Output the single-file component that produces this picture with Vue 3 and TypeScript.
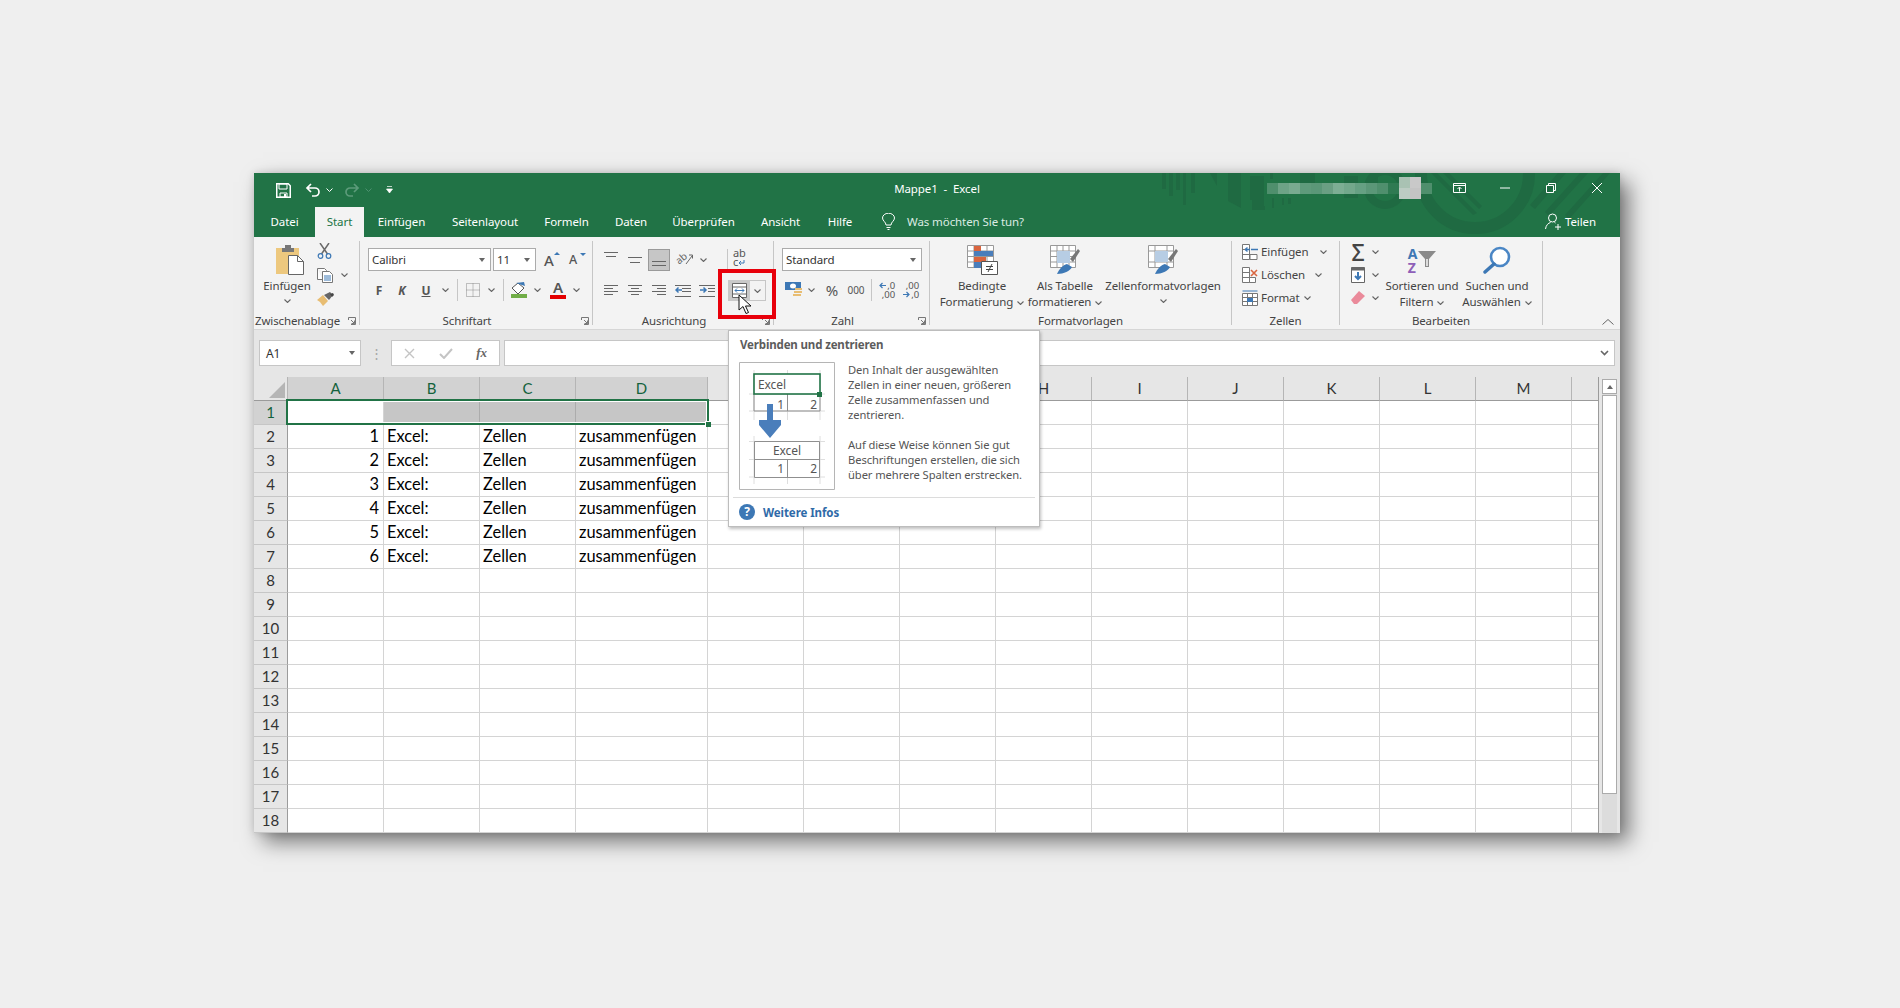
<script setup lang="ts">
const tabs = ['Datei', 'Start', 'Einfügen', 'Seitenlayout', 'Formeln', 'Daten', 'Überprüfen', 'Ansicht', 'Hilfe']
const columns = ['A', 'B', 'C', 'D', 'E', 'F', 'G', 'H', 'I', 'J', 'K', 'L', 'M', '']
const selectedCols = ['A', 'B', 'C', 'D']

// 18 full rows, the next one only shows as a sliver at the window's edge
const rowCount = 19
const rows = Array.from({ length: rowCount }, (_, i) => i + 1)

// content of the sheet, rows 2 to 7
function cellText(row: number, col: string): string {
  if (row < 2 || row > 7) return ''
  if (col === 'A') return String(row - 1)
  if (col === 'B') return 'Excel:'
  if (col === 'C') return 'Zellen'
  if (col === 'D') return 'zusammenfügen'
  return ''
}

// the blurred account name in the title bar
const blurBlocks = [
  '#4f8f6d', '#6ea387', '#79ab90', '#5f9a7b', '#5b9778', '#6a9f83', '#7dae94',
  '#73a88c', '#66a083', '#5b9778', '#4f8f6d', '#2f7a52',
]
const faceBlocks = ['#a9c2b3', '#c9c9c9', '#bcccc3', '#c4c4c4']
</script>

<template>
  <div class="page">
    <svg class="defs" width="0" height="0">
      <symbol id="chev" viewBox="0 0 7 4"><path d="M.5.5l3 3 3-3" fill="none" stroke="#666" stroke-width="1.1" /></symbol>
      <symbol id="launch" viewBox="0 0 8 8"><path d="M.5 3V.5h7v7H3M3 3l3.5 3.5M6.5 3.5v3h-3" fill="none" stroke="#777" /></symbol>
    </svg>

    <div class="window">
      <header class="head">
        <svg class="pattern" viewBox="254 173 1366 64" width="1366" height="64" fill="#1f6a42">
          <path d="M1162 173h4v16h-4zM1169 173h4v23h-4zM1176 173h4v17h-4zM1183 173h3v32h-3zM1191 173h4v20h-4z" />
          <path d="M1210 173h7v13zM1228 173h13v35l-13-7zM1250 176h14v30h1v4h-13v-10h-2z" />
          <path d="M1270 173h3v6h-3zM1272 198h2v10h-2zM1282 198h2v7h-2zM1288 198h3v6h-3zM1300 173h15v10h-15z" />
          <path d="M1344 176h14v22h-14zM1370 173h8v15h-8z" />
          <circle cx="1385" cy="188" r="17" fill="none" stroke="#1f6a42" stroke-width="8" />
          <circle cx="1475" cy="174" r="54" fill="none" stroke="#1f6a42" stroke-width="12" />
          <path d="M1437 173l40 40-4 2-42-42zM1449 173l33 33-3 3-36-36zM1530 205l28-32h8l-31 36zM1545 212l35-39h8l-39 43zM1565 215l38-42h7l-41 46z" />
        </svg>

        <div class="titlerow">
          <div class="quick">
            <svg class="save" width="15" height="15" viewBox="0 0 15 15"><path d="M.75.75h11.5l2 2v11.5H.75z" fill="none" stroke="#fff" stroke-width="1.5" /><path d="M3 1h8v5H3zM4 10h7v4H4z" fill="none" stroke="#fff" /><path d="M8 11h2v3H8z" fill="#fff" /></svg>
            <svg class="undo" width="16" height="14" viewBox="0 0 16 14"><path d="M6 1L2 5l4 4M2 5h8a4 4 0 0 1 0 8H7" fill="none" stroke="#fff" stroke-width="1.7" /></svg>
            <svg class="chev-w" width="7" height="4"><path d="M.5.5l3 3 3-3" fill="none" stroke="#fff" /></svg>
            <svg class="redo" width="16" height="14" viewBox="0 0 16 14"><path d="M10 1l4 4-4 4M14 5H6a4 4 0 0 0 0 8h3" fill="none" stroke="#5c9b7a" stroke-width="1.7" /></svg>
            <svg class="chev-d" width="7" height="4"><path d="M.5.5l3 3 3-3" fill="none" stroke="#4d9170" /></svg>
            <svg class="custom" width="7" height="8"><path d="M1 .5h5M.5 3h6l-3 4z" fill="#fff" stroke="#fff" stroke-width=".7" /></svg>
          </div>
          <div class="doc-title">Mappe1&nbsp; - &nbsp;Excel</div>
          <div class="winbar">
            <div class="account">
              <span v-for="(c, i) in blurBlocks" :key="i" class="blur" :style="{ background: c }" />
              <span class="face"><span v-for="(c, i) in faceBlocks" :key="i" :style="{ background: c }" /></span>
              <span class="blur" :style="{ background: '#4f8f6d' }" />
            </div>
            <button class="winbtn"><svg width="13" height="10" viewBox="0 0 13 10"><path d="M.5.5h12v9H.5zM.5 2.5h12M6.5 8.5V4.5M4.5 6l2-2 2 2" fill="none" stroke="#fff" /></svg></button>
            <button class="winbtn"><svg width="10" height="2"><path d="M0 1h10" stroke="#fff" /></svg></button>
            <button class="winbtn"><svg width="10" height="10" viewBox="0 0 10 10"><path d="M.5 2.5h7v7h-7zM2.5 2.5v-2h7v7h-2" fill="none" stroke="#fff" /></svg></button>
            <button class="winbtn"><svg width="10" height="10" viewBox="0 0 10 10"><path d="M0 0l10 10M10 0L0 10" stroke="#fff" /></svg></button>
          </div>
        </div>

        <nav class="tabs">
          <span v-for="t in tabs" :key="t" class="tab" :class="{ active: t === 'Start' }">{{ t }}</span>
          <span class="tell">
            <svg width="13" height="17" viewBox="0 0 13 17"><path d="M4 12c0-3-3.500-4-3.500-7a6 4.800 0 0 1 12 0c0 3-3.500 4-3.500 7zM4.500 14.500h4M5.500 16.500h2" fill="none" stroke="#fff" /></svg>
            <span>Was möchten Sie tun?</span>
          </span>
          <span class="share">
            <svg width="17" height="17" viewBox="0 0 17 17"><circle cx="7.500" cy="5" r="4" fill="none" stroke="#fff" /><path d="M.5 16c.5-4 3-6 5-6.500M9.500 9.500l1 .5M13 11v6M10 14h6" fill="none" stroke="#fff" /></svg>
            <span>Teilen</span>
          </span>
        </nav>
      </header>

      <section class="ribbon">
        <!-- Zwischenablage -->
        <div class="group g-clip">
          <div class="body row-body">
            <div class="big paste">
              <svg class="big-icon" width="28" height="30" viewBox="0 0 28 30">
                <path d="M0 3h23v26H0z" fill="#edc87e" />
                <path d="M6 3h3V0h6v3h3v4H6z" fill="#777" />
                <path d="M12.500 10.500h9l6 6v13h-15z" fill="#fff" stroke="#666" />
                <path d="M21.500 10.500v6h6" fill="none" stroke="#666" />
              </svg>
              <span>Einfügen</span>
              <svg class="ch solo" width="7" height="4"><use href="#chev" /></svg>
            </div>
            <div class="clip-tools">
              <div class="clip-row">
                <svg width="15" height="16" viewBox="0 0 15 16"><path d="M3 0l7.500 11M12 0L4.500 11" stroke="#6a6a6a" stroke-width="1.500" fill="none" /><circle cx="3.500" cy="13" r="2.300" fill="none" stroke="#3d78b5" stroke-width="1.200" /><circle cx="11.500" cy="13" r="2.300" fill="none" stroke="#3d78b5" stroke-width="1.200" /></svg>
              </div>
              <div class="clip-row">
                <svg width="16" height="15" viewBox="0 0 16 15"><path d="M.5.5h7l2 2v3M.5.5v11h5" fill="#fff" stroke="#777" /><path d="M5.500 3.500h7l3 3v8h-10z" fill="#fff" stroke="#777" /><path d="M7 8h7M7 10h7M7 12h7" stroke="#3d78b5" /></svg>
                <svg class="ch" width="7" height="4"><use href="#chev" /></svg>
              </div>
              <div class="clip-row">
                <svg width="18" height="14" viewBox="0 0 18 14"><path d="M0 8l6-5 5 6-5 5-3-4z" fill="#e8bd72" /><path d="M7 3l6-3 3 3-4 5z" fill="#666" /><path d="M13 2l3-1 1 2-2 2z" fill="#444" /></svg>
              </div>
            </div>
          </div>
          <div class="label-row"><span class="label">Zwischenablage</span><svg class="launch" width="8" height="8"><use href="#launch" /></svg></div>
        </div>
        <i class="sep" />

        <!-- Schriftart -->
        <div class="group g-font">
          <div class="body rows">
            <div class="tool-row">
              <div class="combo w-font"><span>Calibri</span><i class="tri" /></div>
              <div class="combo w-size"><span>11</span><i class="tri" /></div>
              <span class="grow-a">A<i class="up" /></span>
              <span class="shrink-a">A<i class="down" /></span>
            </div>
            <div class="tool-row">
              <span class="tb fmt">F</span>
              <span class="tb fmt w24 it">K</span>
              <span class="tb fmt w24 ul">U</span>
              <span class="cb"><svg width="7" height="4"><use href="#chev" /></svg></span>
              <i class="mini-sep s5" />
              <span class="tb ml4">
                <svg width="14" height="14" viewBox="0 0 14 14"><path d="M.5.5h13v13H.5zM7 .5v13M.5 7h13" fill="none" stroke="#888" stroke-dasharray="1 1" /></svg>
              </span>
              <span class="cb"><svg width="7" height="4"><use href="#chev" /></svg></span>
              <i class="mini-sep s5" />
              <span class="tb ml4">
                <svg width="16" height="16" viewBox="0 0 16 16"><path d="M7 1l6 5-6 6-6-6z" fill="#fff" stroke="#555" /><path d="M5 1l8-1 1 4z" fill="#3d78b5" /><path d="M0 12h16v4H0z" fill="#70ad47" /></svg>
              </span>
              <span class="cb"><svg width="7" height="4"><use href="#chev" /></svg></span>
              <span class="tb ml3 color-a">A<i /></span>
              <span class="cb"><svg width="7" height="4"><use href="#chev" /></svg></span>
            </div>
          </div>
          <div class="label-row"><span class="label">Schriftart</span><svg class="launch" width="8" height="8"><use href="#launch" /></svg></div>
        </div>
        <i class="sep" />

        <!-- Ausrichtung -->
        <div class="group g-align">
          <div class="body rows">
            <div class="tool-row">
              <span class="tb al-top"><svg width="14" height="12" viewBox="0 0 14 12"><path d="M0 1.500h14M2 5.500h10" stroke="#666" /></svg></span>
              <span class="tb"><svg width="14" height="8" viewBox="0 0 14 8"><path d="M0 1.500h14M2 6.500h10" stroke="#666" /></svg></span>
              <span class="tb on al-bot"><svg width="14" height="7" viewBox="0 0 14 7"><path d="M0 1.500h14M0 5.500h14" stroke="#666" /></svg></span>
              <span class="tb w24 orient">
                <span class="orient-ab">ab</span>
                <svg width="19" height="15" viewBox="0 0 19 15"><path d="M11 12l6-8M14 3h3.500v3.500" fill="none" stroke="#666" /></svg>
              </span>
              <span class="cb w10"><svg width="7" height="4"><use href="#chev" /></svg></span>
              <i class="mini-sep wrap-sep" />
              <span class="wrap-ab">
                <span>ab</span>
                <span>c<svg width="7" height="6" viewBox="0 0 7 6"><path d="M6 0v3H1M3 1L1 3l2 2" fill="none" stroke="#3d78b5" /></svg></span>
              </span>
            </div>
            <div class="tool-row">
              <span class="tb"><svg width="14" height="11" viewBox="0 0 14 11"><path d="M0 .5h14M0 3.500h9M0 6.500h14M0 9.500h9" stroke="#666" /></svg></span>
              <span class="tb"><svg width="14" height="11" viewBox="0 0 14 11"><path d="M0 .5h14M3 3.500h8M0 6.500h14M3 9.500h8" stroke="#666" /></svg></span>
              <span class="tb"><svg width="14" height="11" viewBox="0 0 14 11"><path d="M0 .5h14M5 3.500h9M0 6.500h14M5 9.500h9" stroke="#666" /></svg></span>
              <span class="tb"><svg width="16" height="12" viewBox="0 0 16 12"><path d="M0 .5h16M7 3.500h9M7 6.500h9M0 11.500h16" stroke="#666" /><path d="M7 5H1M3.500 2.500L1 5l2.500 2.500" fill="none" stroke="#3d78b5" stroke-width="1.500" /></svg></span>
              <span class="tb"><svg width="16" height="12" viewBox="0 0 16 12"><path d="M0 .5h16M9 3.500h7M9 6.500h7M0 11.500h16" stroke="#666" /><path d="M1 5h6M4.500 2.500L7 5 4.500 7.500" fill="none" stroke="#3d78b5" stroke-width="1.500" /></svg></span>
              <span class="merge">
                <span class="merge-main">
                  <svg width="15" height="15" viewBox="0 0 15 15"><path d="M.5.5h14v14H.5z" fill="#fff" stroke="#666" /><path d="M.5 4h14M.5 11h14" stroke="#666" /><path d="M3 7.500h9M5 5.500l-2 2 2 2M10 5.500l2 2-2 2" fill="none" stroke="#3d78b5" /></svg>
                </span>
                <span class="merge-drop"><svg width="7" height="4"><use href="#chev" /></svg></span>
              </span>
            </div>
          </div>
          <div class="label-row"><span class="label">Ausrichtung</span><svg class="launch" width="8" height="8"><use href="#launch" /></svg></div>
        </div>
        <i class="sep" />

        <!-- Zahl -->
        <div class="group g-num">
          <div class="body rows">
            <div class="tool-row">
              <div class="combo w-num"><span>Standard</span><i class="tri" /></div>
            </div>
            <div class="tool-row">
              <span class="tb">
                <svg width="17" height="16" viewBox="0 0 17 16"><path d="M0 0h16v8H0z" fill="#3d78b5" /><ellipse cx="8" cy="4" rx="3" ry="2.500" fill="#fff" /><path d="M9 9h8v2H9zM8 12h8v2H8z" fill="#e8bd72" /><path d="M10 6h7v2h-7z" fill="#e8bd72" /></svg>
              </span>
              <span class="cb"><svg width="7" height="4"><use href="#chev" /></svg></span>
              <span class="tb ml3 pct">%</span>
              <span class="tb ml2 thou">000</span>
              <i class="mini-sep s4" />
              <span class="tb ml4 dec">
                <span class="dec-text">,0<br />,00</span>
                <svg width="7" height="7" viewBox="0 0 7 7"><path d="M7 3.500H1M3.500 1L1 3.500 3.500 6" fill="none" stroke="#3d78b5" stroke-width="1.200" /></svg>
              </span>
              <span class="tb ml2 dec">
                <span class="dec-text">,00<br />,0</span>
                <svg class="low" width="7" height="7" viewBox="0 0 7 7"><path d="M0 3.500h6M3.500 1L6 3.500 3.500 6" fill="none" stroke="#3d78b5" stroke-width="1.200" /></svg>
              </span>
            </div>
          </div>
          <div class="label-row"><span class="label">Zahl</span><svg class="launch" width="8" height="8"><use href="#launch" /></svg></div>
        </div>
        <i class="sep" />

        <!-- Formatvorlagen -->
        <div class="group g-style">
          <div class="body row-body">
            <div class="big w90">
              <svg class="big-icon" width="31" height="30" viewBox="0 0 31 30">
                <path d="M.5.5h26v22H.5zM.5 6h26M.5 11.500h26M.5 17h26M7 .5v22M20 .5v22" fill="#fff" stroke="#999" />
                <path d="M7 1h7v5H7z" fill="#d9653f" /><path d="M7 6h19v5H7z" fill="#4a7ebb" /><path d="M7 12h12v5H7z" fill="#d9653f" /><path d="M7 17h7v6H7z" fill="#4a7ebb" />
                <path d="M14.500 16.500h16v13h-16z" fill="#fff" stroke="#555" />
                <path d="M19 21.500h7M19 24.500h7M25 19l-4 8" fill="none" stroke="#444" />
              </svg>
              <span>Bedingte</span>
              <span>Formatierung<svg class="ch inline" width="7" height="4"><use href="#chev" /></svg></span>
            </div>
            <div class="big w76">
              <svg class="big-icon" width="30" height="30" viewBox="0 0 30 30">
                <path d="M.5.5h25v22H.5zM.5 6h25M.5 11.500h25M.5 17h25M7 .5v22M13 .5v22M19 .5v22" fill="#fff" stroke="#999" />
                <path d="M7 6h13v12H7z" fill="#b7cde4" />
                <path d="M20 14L28 4l2 2-7 11z" fill="#777" />
                <path d="M7 29c2-5 6-9 10-10l5 3c-2 4-8 7-15 7z" fill="#3d78b5" />
              </svg>
              <span>Als Tabelle</span>
              <span>formatieren<svg class="ch inline" width="7" height="4"><use href="#chev" /></svg></span>
            </div>
            <div class="big w120">
              <svg class="big-icon" width="30" height="30" viewBox="0 0 30 30">
                <path d="M.5.5h25v22H.5zM.5 6h25M.5 17h25M7 .5v22M19 .5v22" fill="#fff" stroke="#999" />
                <path d="M7 6h13v11H7z" fill="#b7cde4" />
                <path d="M20 14L28 4l2 2-7 11z" fill="#777" />
                <path d="M7 29c2-5 6-9 10-10l5 3c-2 4-8 7-15 7z" fill="#3d78b5" />
              </svg>
              <span>Zellenformatvorlagen</span>
              <svg class="ch solo" width="7" height="4"><use href="#chev" /></svg>
            </div>
          </div>
          <div class="label-row none"><span class="label">Formatvorlagen</span></div>
        </div>
        <i class="sep" />

        <!-- Zellen -->
        <div class="group g-cells">
          <div class="body cell-tools">
            <div class="cell-tool">
              <svg width="16" height="16" viewBox="0 0 16 16"><path d="M.5.5h7v15h-7zM.5 5.500h7M.5 10.500h7M8 10.500v5h7v-5z" fill="#fff" stroke="#777" /><path d="M9 5.500h7M3 5.500l2.500-2M3 5.500l2.500 2M3 5.500h5" fill="none" stroke="#3d78b5" stroke-width="1.300" /></svg>
              <span>Einfügen</span>
              <svg class="ch m8" width="7" height="4"><use href="#chev" /></svg>
            </div>
            <div class="cell-tool">
              <svg width="16" height="16" viewBox="0 0 16 16"><path d="M.5.5h7v15h-7zM.5 5.500h7M.5 10.500h7M7.500 10.500h6v5h-6z" fill="#fff" stroke="#777" /><path d="M9 3l6 6M15 3L9 9" stroke="#d9653f" stroke-width="1.600" /></svg>
              <span>Löschen</span>
              <svg class="ch m7" width="7" height="4"><use href="#chev" /></svg>
            </div>
            <div class="cell-tool">
              <svg width="16" height="16" viewBox="0 0 16 16"><path d="M.5 3.500h15v12H.5zM.5 7.500h15M.5 11.500h15M5.500 3.500v12M10.500 3.500v12" fill="#fff" stroke="#777" /><path d="M5 8h6v4H5z" fill="#3d78b5" /><path d="M.5 1h15" stroke="#3d78b5" /></svg>
              <span>Format</span>
              <svg class="ch m1" width="7" height="4"><use href="#chev" /></svg>
            </div>
          </div>
          <div class="label-row none"><span class="label">Zellen</span></div>
        </div>
        <i class="sep" />

        <!-- Bearbeiten -->
        <div class="group g-edit">
          <div class="body row-body">
            <div class="edit-tools">
              <div class="edit-row">
                <span class="ei sigma">Σ</span>
                <svg width="7" height="4"><use href="#chev" /></svg>
              </div>
              <div class="edit-row">
                <span class="ei"><svg width="14" height="16" viewBox="0 0 14 16"><path d="M.5.5h13v15H.5z" fill="#fff" stroke="#666" /><path d="M.5.5h13v3H.5z" fill="#666" /><path d="M7 5v7M4 9l3 3 3-3" fill="none" stroke="#3d78b5" stroke-width="2" /></svg></span>
                <svg width="7" height="4"><use href="#chev" /></svg>
              </div>
              <div class="edit-row">
                <span class="ei"><svg width="14" height="13" viewBox="0 0 14 13"><path d="M0 9l8-9 6 5-8 8H3z" fill="#ea8a9a" /></svg></span>
                <svg width="7" height="4"><use href="#chev" /></svg>
              </div>
            </div>
            <div class="big w76">
              <div class="sort-icon">
                <span class="sort-letters"><b>A</b><b>Z</b></span>
                <svg width="18" height="18" viewBox="0 0 18 18"><path d="M0 1h18l-7 8v8H7V9z" fill="#8a8a8a" /><path d="M8 9v7h2V9z" fill="#dcdcdc" /></svg>
              </div>
              <span>Sortieren und</span>
              <span>Filtern<svg class="ch inline" width="7" height="4"><use href="#chev" /></svg></span>
            </div>
            <div class="big w74">
              <svg class="big-icon" width="28" height="28" viewBox="0 0 28 28">
                <circle cx="17" cy="11" r="9" fill="#fff" stroke="#4a86c5" stroke-width="2.600" />
                <path d="M11 18L2 26" stroke="#3d78b5" stroke-width="3.400" stroke-linecap="round" />
              </svg>
              <span>Suchen und</span>
              <span>Auswählen<svg class="ch inline" width="7" height="4"><use href="#chev" /></svg></span>
            </div>
          </div>
          <div class="label-row none"><span class="label">Bearbeiten</span></div>
        </div>
        <i class="sep" />

        <div class="collapse">
          <svg width="12" height="6" viewBox="0 0 12 6"><path d="M.5 5.500L6 .5l5.500 5" fill="none" stroke="#666" /></svg>
        </div>
      </section>

      <div class="formula">
        <div class="namebox"><span>A1</span><i class="tri" /></div>
        <span class="grip">⋮</span>
        <div class="fx-box">
          <svg width="11" height="11" viewBox="0 0 11 11"><path d="M1 1l9 9M10 1l-9 9" stroke="#c4c4c4" stroke-width="1.400" /></svg>
          <svg width="14" height="11" viewBox="0 0 14 11"><path d="M1 6l4 4 8-9" fill="none" stroke="#c4c4c4" stroke-width="2" /></svg>
          <span class="fx">fx</span>
        </div>
        <div class="input"><svg width="9" height="6" viewBox="0 0 9 6"><path d="M1 1l3.500 3.500L8 1" fill="none" stroke="#666" stroke-width="1.600" /></svg></div>
      </div>

      <div class="sheet-wrap">
        <div class="sheet">
          <div class="sheet-grid">
            <div class="corner"><i /></div>
            <div
              v-for="c in columns"
              :key="'h' + c"
              class="col-head"
              :class="{ sel: selectedCols.includes(c), last: c === '' }"
            >{{ c }}</div>
            <template v-for="r in rows" :key="r">
              <div class="row-head" :class="{ sel: r === 1 }">{{ r < rowCount ? r : '' }}</div>
              <div
                v-for="c in columns"
                :key="c"
                class="cell"
                :class="{
                  num: c === 'A',
                  merged: r === 1 && ['B', 'C', 'D'].includes(c),
                  last: c === '',
                }"
              >{{ cellText(r, c) }}</div>
            </template>
          </div>
          <div class="selection"><i class="handle" /></div>
        </div>
        <div class="vscroll">
          <div class="vs-up"><i /></div>
          <div class="vs-thumb" />
        </div>
      </div>

      <div class="redbox" />
      <svg class="cursor" width="14" height="21" viewBox="0 0 14 21"><path d="M1 1v15l4-3.500 3 7 2.500-1-3-6.500H13z" fill="#fff" stroke="#111" /></svg>

      <aside class="tip">
        <div class="tip-title">Verbinden und zentrieren</div>
        <div class="tip-body">
          <svg class="tip-pic" width="96" height="128" viewBox="0 0 96 128">
            <path d="M.5.500h95v127H.5z" fill="#fff" stroke="#b5b5b5" />
            <path d="M15 8v50M81 8v50M48.500 8v50M10 32h76M10 49h76M15 74v48M81 74v48M48.500 110v12M10 79.500h76M10 97.500h76M10 115h76" stroke="#dedede" fill="none" />
            <path d="M15 32v17h66V32M48.500 32v17" stroke="#8f8f8f" fill="none" />
            <rect x="15" y="12" width="66" height="20" fill="#fff" stroke="#217346" stroke-width="1.600" />
            <rect x="78" y="30" width="5" height="5" fill="#217346" />
            <text x="19" y="27" font-size="12" fill="#555" font-family="Noto Sans">Excel</text>
            <text x="45" y="47" font-size="12" fill="#555" text-anchor="end" font-family="Noto Sans">1</text>
            <text x="78" y="47" font-size="12" fill="#555" text-anchor="end" font-family="Noto Sans">2</text>
            <path d="M28 42h6v16h8v5l-11 13-11-13v-5h8z" fill="#4a7ebb" />
            <path d="M15.500 79.500h65v36h-65zM15.500 97.500h65M48.500 97.500v18" fill="#fff" stroke="#8f8f8f" />
            <text x="48" y="93" font-size="12" fill="#555" text-anchor="middle" font-family="Noto Sans">Excel</text>
            <text x="45" y="111" font-size="12" fill="#555" text-anchor="end" font-family="Noto Sans">1</text>
            <text x="78" y="111" font-size="12" fill="#555" text-anchor="end" font-family="Noto Sans">2</text>
          </svg>
          <div class="tip-text">
            <p>Den Inhalt der ausgewählten<br />Zellen in einer neuen, größeren<br />Zelle zusammenfassen und<br />zentrieren.</p>
            <p>Auf diese Weise können Sie gut<br />Beschriftungen erstellen, die sich<br />über mehrere Spalten erstrecken.</p>
          </div>
        </div>
        <div class="tip-foot">
          <span class="help">?</span>
          <span>Weitere Infos</span>
        </div>
      </aside>
    </div>
  </div>
</template>

<style>
html,
body {
  margin: 0;
  background: #efefef;
}
</style>

<style scoped>
.page {
  width: 1900px;
  height: 1008px;
  box-sizing: border-box;
  padding: 173px 0 0 254px;
  background: #efefef;
  overflow: hidden;
  font-family: "Noto Sans", "Liberation Sans", sans-serif;
  font-size: 11.5px;
  letter-spacing: -0.08px;
  color: #444;
}
.defs {
  position: absolute;
}
.window {
  position: relative;
  width: 1366px;
  height: 660px;
  display: flex;
  flex-direction: column;
  background: #e6e6e6;
  box-shadow: 9px 9px 20px rgba(0, 0, 0, 0.5), 0 0 8px rgba(0, 0, 0, 0.12);
}

/* title bar */
.head {
  position: relative;
  height: 64px;
  flex: none;
  background: #217346;
  color: #fff;
  overflow: hidden;
}
.pattern {
  position: absolute;
  left: 0;
  top: 0;
}
.titlerow {
  position: relative;
  height: 34px;
  display: grid;
  grid-template-columns: 1fr auto 1fr;
  align-items: center;
}
.quick {
  display: flex;
  align-items: center;
  padding-left: 22px;
}
.undo { margin-left: 14px; }
.chev-w { margin-left: 5px; }
.redo { margin-left: 11px; }
.chev-d { margin-left: 5px; }
.custom { margin-left: 14px; }
.doc-title {
  font-size: 11.5px;
  white-space: pre;
  padding-bottom: 3px;
}
.winbar {
  display: flex;
  align-items: center;
  justify-content: flex-end;
  align-self: start;
  height: 30px;
}
.account {
  display: flex;
  align-items: center;
  margin-right: 4px;
}
.blur {
  width: 11px;
  height: 11px;
}
.face {
  width: 22px;
  height: 22px;
  display: grid;
  grid-template-columns: 11px 11px;
  grid-auto-rows: 11px;
}
.winbtn {
  width: 46px;
  height: 30px;
  padding: 0;
  border: 0;
  background: none;
  display: flex;
  align-items: center;
  justify-content: center;
}
.tabs {
  position: relative;
  height: 30px;
  display: grid;
  grid-template-columns: 61px 49px 75px 92px 71px 58px 87px 67px 52px auto 1fr;
  font-size: 11.5px;
}
.tab {
  display: flex;
  align-items: center;
  justify-content: center;
  padding-bottom: 2px;
}
.tab.active {
  background: #f3f3f3;
  color: #217346;
}
.tell {
  display: flex;
  align-items: center;
  gap: 12px;
  padding: 0 0 2px 16px;
  color: #dcebe3;
}
.share {
  display: flex;
  align-items: center;
  justify-content: flex-end;
  gap: 3px;
  padding: 0 24px 2px 0;
}

/* ribbon */
.ribbon {
  height: 92px;
  flex: none;
  display: flex;
  background: #f3f3f3;
  border-bottom: 1px solid #d6d6d6;
  box-sizing: content-box;
}
.sep {
  flex: none;
  width: 1px;
  margin: 4px 0;
  background: #c6c6c6;
}
.group {
  flex: none;
  display: flex;
  flex-direction: column;
  height: 92px;
}
.g-clip { width: 105px; }
.g-font { width: 232px; }
.g-align { width: 180px; }
.g-num { width: 155px; }
.g-style { width: 301px; }
.g-cells { width: 107px; }
.g-edit { width: 202px; }
.body {
  flex: 1;
  min-height: 0;
}
.label-row {
  display: flex;
  align-items: center;
  height: 14px;
  margin-bottom: 1px;
  padding-right: 3px;
}
.label {
  flex: 1;
  text-align: center;
  white-space: nowrap;
  margin-top: -2px;
  letter-spacing: -0.13px;
}
.launch {
  margin-left: 7px;
}
.label-row.none {
  padding-right: 0;
}
.rows {
  padding-top: 11px;
  display: flex;
  flex-direction: column;
  gap: 8px;
}
.g-font .rows { padding-left: 8px; }
.g-align .rows { padding-left: 7px; }
.g-num .rows { padding-left: 8px; }
.tool-row {
  display: flex;
  align-items: center;
  height: 23px;
}
.g-font .tool-row + .tool-row,
.g-num .tool-row + .tool-row {
  height: 22px;
}
.row-body {
  display: flex;
}
.g-style .row-body { padding-left: 7px; }
.g-edit .row-body { padding-left: 7px; }

.combo {
  box-sizing: border-box;
  height: 23px;
  display: flex;
  align-items: center;
  justify-content: space-between;
  background: #fff;
  border: 1px solid #ababab;
  padding: 0 5px 0 3px;
  color: #333;
}
.w-font { width: 123px; }
.w-size { width: 43px; margin-left: 2px; }
.w-num { width: 140px; }
.tri {
  width: 0;
  height: 0;
  border: 3.5px solid transparent;
  border-top: 4px solid #666;
  border-bottom: 0;
}
.grow-a,
.shrink-a {
  position: relative;
  font-weight: 500;
  color: #555;
}
.grow-a {
  margin-left: 8px;
  width: 13px;
  font-size: 15px;
}
.shrink-a {
  margin-left: 12px;
  width: 14px;
  font-size: 12.5px;
}
.up,
.down {
  position: absolute;
  right: -3px;
  top: 2px;
  width: 0;
  height: 0;
  border: 3px solid transparent;
}
.up { border-bottom: 3px solid #3d78b5; border-top: 0; }
.down { border-top: 3px solid #3d78b5; border-bottom: 0; }

.tb {
  box-sizing: border-box;
  flex: none;
  width: 22px;
  height: 22px;
  display: flex;
  align-items: center;
  justify-content: center;
}
.g-align .tb {
  margin-right: 2px;
}
.g-align .tb.orient {
  margin-right: 0;
  position: relative;
}
.orient-ab {
  position: absolute;
  left: 3px;
  top: 3px;
  font-size: 10px;
  line-height: 12px;
  color: #666;
  transform: rotate(-40deg);
}
.w24 { width: 24px; }
.w10 { width: 10px; }
.ml2 { margin-left: 2px; }
.ml3 { margin-left: 3px; }
.ml4 { margin-left: 4px; }
.cb {
  flex: none;
  width: 14px;
  display: flex;
  align-items: center;
  justify-content: center;
}
.fmt {
  font-size: 12px;
  font-weight: 700;
  color: #555;
}
.it { font-style: italic; }
.ul { text-decoration: underline; }
.mini-sep {
  flex: none;
  width: 1px;
  height: 22px;
  background: #c6c6c6;
}
.s5 { margin-left: 5px; }
.s4 { margin-left: 4px; }
.wrap-sep { margin-left: 17px; }
.on {
  background: #c6c6c6;
  border: 1px solid #9a9a9a;
}
.al-top { align-items: flex-start; padding-top: 2px; }
.al-bot { align-items: flex-end; padding-bottom: 3px; }
.color-a {
  flex-direction: column;
  font-size: 15px;
  font-weight: 600;
  line-height: 13px;
  color: #555;
}
.color-a i {
  width: 16px;
  height: 4px;
  margin-top: 1px;
  background: #e30000;
}
.wrap-ab {
  display: flex;
  flex-direction: column;
  margin: -6px 0 0 5px;
  font-size: 11px;
  line-height: 9px;
  color: #555;
}
.merge {
  display: flex;
  margin-left: 8px;
  height: 21px;
}
.merge-main {
  width: 22px;
  background: #c9c9c9;
  display: flex;
  align-items: center;
  justify-content: center;
}
.merge-drop {
  box-sizing: border-box;
  width: 16px;
  border: 1px solid #c6c6c6;
  border-left: 0;
  display: flex;
  align-items: center;
  justify-content: center;
}
.pct {
  font-size: 15px;
  color: #555;
}
.thou {
  font-size: 10px;
  color: #555;
}
.dec {
  position: relative;
  justify-content: flex-end;
  padding-right: 3px;
}
.dec-text {
  font-size: 9.5px;
  line-height: 9px;
  text-align: right;
  color: #555;
}
.dec svg {
  position: absolute;
  left: 3px;
  top: 3px;
}
.dec svg.low {
  top: 12px;
}

/* large buttons */
.big {
  flex: none;
  display: flex;
  flex-direction: column;
  align-items: center;
  padding-top: 8px;
  line-height: 16px;
  color: #444;
  white-space: nowrap;
}
.big-icon {
  height: 30px;
  margin-bottom: 3px;
  flex: none;
}
.sort-icon {
  height: 30px;
  margin-bottom: 3px;
  display: flex;
  align-items: flex-end;
}
.sort-letters {
  display: flex;
  flex-direction: column;
  font-size: 14px;
  line-height: 14px;
  color: #3d78b5;
}
.sort-letters b + b {
  color: #8e5fb8;
}
.sort-icon svg {
  margin: 0 0 7px 1px;
}
.paste { width: 60px; margin-left: 3px; }
.paste .big-icon { margin-left: 5px; }
.w90 { width: 90px; }
.w76 { width: 76px; }
.w74 { width: 74px; }
.w120 { width: 120px; }
.ch.inline { margin-left: 4px; vertical-align: middle; }
.ch.solo { margin-top: 5px; }
.clip-tools {
  display: flex;
  flex-direction: column;
  padding-top: 6px;
  gap: 8px;
}
.clip-row {
  height: 16px;
  display: flex;
  align-items: center;
  gap: 8px;
}
.cell-tools {
  padding: 3px 0 0 10px;
}
.cell-tool {
  height: 23px;
  display: flex;
  align-items: center;
  gap: 3px;
  white-space: nowrap;
}
.m8 { margin-left: 8px; }
.m7 { margin-left: 7px; }
.m1 { margin-left: 1px; }
.edit-tools {
  flex: none;
  width: 37px;
  padding-top: 3px;
}
.edit-row {
  height: 23px;
  display: flex;
  align-items: center;
  gap: 3px;
}
.ei {
  width: 22px;
  display: flex;
  align-items: center;
  justify-content: center;
}
.sigma {
  font-size: 23px;
  font-weight: 500;
  line-height: 20px;
  color: #444;
}
.collapse {
  flex: 1;
  display: flex;
  align-items: flex-end;
  justify-content: flex-end;
  padding: 0 6px 4px 0;
}

/* formula bar */
.formula {
  height: 26px;
  flex: none;
  margin-top: 10px;
  display: flex;
  align-items: center;
  padding-left: 5px;
  font-size: 12px;
}
.namebox {
  box-sizing: border-box;
  width: 102px;
  height: 26px;
  display: flex;
  align-items: center;
  justify-content: space-between;
  background: #fff;
  border: 1px solid #c6c6c6;
  padding: 0 5px 0 6px;
  color: #333;
}
.grip {
  width: 30px;
  text-align: center;
  color: #a5a5a5;
  font-size: 13px;
}
.fx-box {
  box-sizing: border-box;
  width: 109px;
  height: 26px;
  display: flex;
  align-items: center;
  justify-content: space-between;
  background: #fff;
  border: 1px solid #c6c6c6;
  padding: 0 12px;
}
.fx {
  font-family: "Liberation Serif", serif;
  font-style: italic;
  font-weight: 700;
  font-size: 13px;
  color: #666;
}
.input {
  box-sizing: border-box;
  width: 1111px;
  height: 26px;
  margin-left: 4px;
  display: flex;
  align-items: center;
  justify-content: flex-end;
  padding-right: 5px;
  background: #fff;
  border: 1px solid #c6c6c6;
}

/* sheet */
.sheet-wrap {
  flex: 1;
  min-height: 0;
  margin-top: 11px;
  display: flex;
  overflow: hidden;
}
.sheet {
  position: relative;
  flex: none;
  width: 1345px;
  box-sizing: border-box;
  border-right: 1px solid #9b9b9b;
  overflow: hidden;
}
.sheet-grid {
  display: grid;
  grid-template-columns: 34px repeat(3, 96px) 132px repeat(9, 96px) 26px;
  grid-auto-rows: 24px;
  font-family: Lato, "Liberation Sans", sans-serif;
  font-size: 16.4px;
  letter-spacing: 0;
  color: #000;
  background: #fff;
}
.corner {
  box-sizing: border-box;
  background: #e6e6e6;
  border-right: 1px solid #b5b5b5;
  border-bottom: 1px solid #9b9b9b;
  position: relative;
}
.corner i {
  position: absolute;
  right: 2px;
  bottom: 2px;
  width: 0;
  height: 0;
  border-left: 16px solid transparent;
  border-bottom: 16px solid #b5b5b5;
}
.col-head {
  box-sizing: border-box;
  background: #e6e6e6;
  border-right: 1px solid #b5b5b5;
  border-bottom: 1px solid #9b9b9b;
  display: flex;
  align-items: center;
  justify-content: center;
  padding-bottom: 2px;
  font-size: 15px;
  color: #333;
}
.col-head.sel {
  background: #d2d2d2;
  color: #14623c;
}
.col-head.last {
  border-right: 0;
}
.row-head {
  box-sizing: border-box;
  background: #e6e6e6;
  border-right: 1px solid #9b9b9b;
  border-bottom: 1px solid #c6c6c6;
  display: flex;
  align-items: center;
  justify-content: center;
  padding-bottom: 2px;
  font-size: 15px;
  color: #333;
}
.row-head.sel {
  background: #d2d2d2;
  color: #14623c;
}
.cell {
  box-sizing: border-box;
  border-right: 1px solid #d4d4d4;
  border-bottom: 1px solid #d4d4d4;
  padding: 0 4px 0 3px;
  line-height: 21px;
  white-space: nowrap;
  overflow: hidden;
}
.cell.num {
  text-align: right;
}
.cell.merged {
  background: #c6c6c6;
  border-right-color: #acacac;
}
.cell.last {
  border-right: 0;
}
.selection {
  position: absolute;
  left: 32px;
  top: 22px;
  width: 423px;
  height: 26px;
  box-sizing: border-box;
  border: 2px solid #217346;
  outline: 1px solid #fff;
  outline-offset: -3px;
}
.handle {
  position: absolute;
  right: -4px;
  bottom: -4px;
  width: 5px;
  height: 5px;
  background: #217346;
  border: 1px solid #fff;
  border-right: 0;
  border-bottom: 0;
}
.vscroll {
  flex: none;
  width: 15px;
  margin: 2px 0 0 3px;
  display: flex;
  flex-direction: column;
  background: #dcdcdc;
}
.vs-up {
  box-sizing: border-box;
  height: 15px;
  background: #fff;
  border: 1px solid #ababab;
  display: flex;
  align-items: center;
  justify-content: center;
}
.vs-up i {
  width: 0;
  height: 0;
  border: 3.5px solid transparent;
  border-bottom: 4px solid #666;
  border-top: 0;
}
.vs-thumb {
  box-sizing: border-box;
  height: 399px;
  margin-top: 1px;
  background: #fff;
  border: 1px solid #ababab;
}

/* overlays */
.redbox {
  position: absolute;
  left: 464px;
  top: 96px;
  width: 58px;
  height: 50px;
  box-sizing: border-box;
  border: 4px solid #e8000b;
}
.cursor {
  position: absolute;
  left: 484px;
  top: 121px;
}
.tip {
  position: absolute;
  left: 474px;
  top: 157px;
  width: 312px;
  height: 197px;
  box-sizing: border-box;
  display: flex;
  flex-direction: column;
  background: #fff;
  border: 1px solid #bdbdbd;
  box-shadow: 1px 2px 3px rgba(0, 0, 0, 0.25);
  padding: 0 4px;
  color: #555;
}
.tip-title {
  height: 31px;
  line-height: 27px;
  padding-left: 7px;
  font-weight: 700;
  font-size: 11.5px;
  letter-spacing: -0.15px;
  color: #5c5c5c;
}
.tip-body {
  display: flex;
  padding-left: 6px;
}
.tip-pic {
  flex: none;
}
.tip-text {
  margin-left: 13px;
  line-height: 15px;
  font-size: 11.2px;
  white-space: nowrap;
}
.tip-text p {
  margin: 0 0 15px;
}
.tip-text p:last-child {
  margin: 0;
}
.tip-foot {
  margin-top: 7px;
  border-top: 1px solid #dcdcdc;
  flex: 1;
  display: flex;
  align-items: center;
  gap: 8px;
  padding-left: 6px;
  font-weight: 700;
  font-size: 11.5px;
  color: #2f6aa8;
}
.help {
  width: 16px;
  height: 16px;
  border-radius: 50%;
  background: #3d78b5;
  color: #fff;
  display: flex;
  align-items: center;
  justify-content: center;
  font-size: 12px;
  line-height: 1;
}
</style>
